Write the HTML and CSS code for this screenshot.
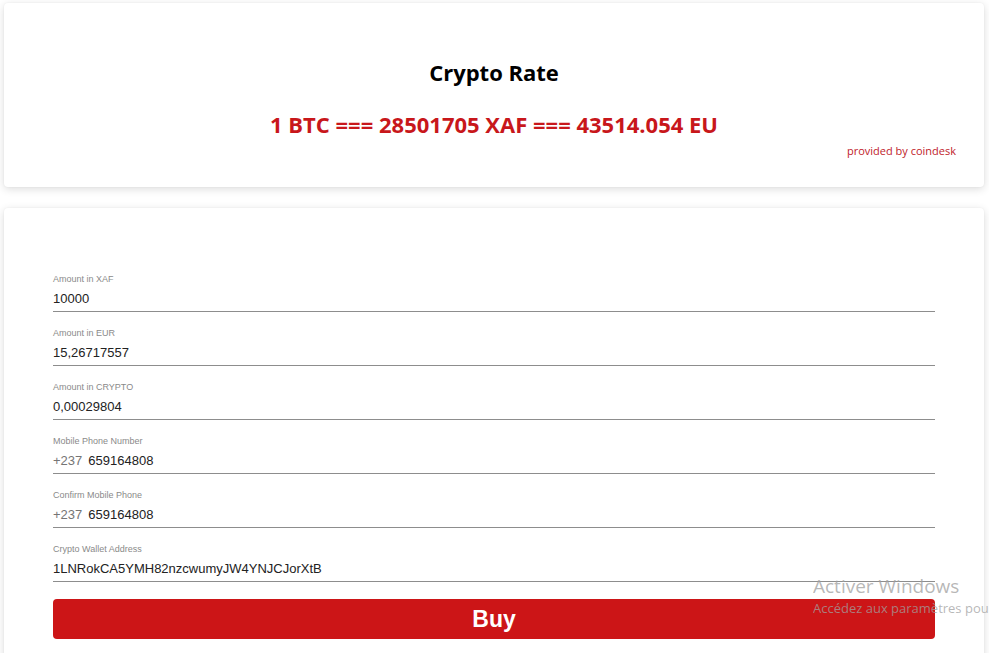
FILE: index.html
```html
<!DOCTYPE html>
<html lang="fr">
<head>
<meta charset="utf-8">
<title>Crypto Rate</title>
<link rel="stylesheet" href="styles.css">
</head>
<body>
<div class="page">
  <section class="card rate-card">
    <h1 class="rate-title">Crypto Rate</h1>
    <p class="rate-value">1 BTC === 28501705 XAF === 43514.054 EU</p>
    <p class="rate-source">provided by coindesk</p>
  </section>

  <section class="card form-card">
    <form class="form">
      <div class="field">
        <label class="field-label">Amount in XAF</label>
        <div class="field-input"><span class="field-value">10000</span></div>
      </div>
      <div class="field">
        <label class="field-label">Amount in EUR</label>
        <div class="field-input"><span class="field-value">15,26717557</span></div>
      </div>
      <div class="field">
        <label class="field-label">Amount in CRYPTO</label>
        <div class="field-input"><span class="field-value">0,00029804</span></div>
      </div>
      <div class="field">
        <label class="field-label">Mobile Phone Number</label>
        <div class="field-input"><span class="field-prefix">+237</span><span class="field-value">659164808</span></div>
      </div>
      <div class="field">
        <label class="field-label">Confirm Mobile Phone</label>
        <div class="field-input"><span class="field-prefix">+237</span><span class="field-value">659164808</span></div>
      </div>
      <div class="field">
        <label class="field-label">Crypto Wallet Address</label>
        <div class="field-input"><span class="field-value">1LNRokCA5YMH82nzcwumyJW4YNJCJorXtB</span></div>
      </div>
      <button type="button" class="buy-btn">Buy</button>
    </form>
  </section>
</div>

<div class="watermark">
  <div class="wm-title">Activer Windows</div>
  <div class="wm-sub">Accédez aux paramètres pour activer Windows.</div>
</div>
</body>
</html>
```

FILE: styles.css
```css
html, body {
  margin: 0;
  padding: 0;
  background: #ffffff;
  overflow: hidden;
  height: 653px;
}

.page {
  padding: 3px 5px 0 4px;
  display: flex;
  flex-direction: column;
  gap: 21px;
}

.card {
  background: #fff;
  border-radius: 4px;
  box-shadow: 0 2px 8px rgba(0, 0, 0, 0.14), 0 0 2px rgba(0, 0, 0, 0.06);
}

.rate-card {
  height: 184px;
  box-sizing: border-box;
  padding: 55px 28px 0 28px;
  font-family: "Open Sans", "Noto Sans", sans-serif;
}

.rate-title {
  margin: 0;
  text-align: center;
  font-size: 22px;
  font-weight: 700;
  line-height: 28px;
  color: #000;
}

.rate-value {
  margin: 24px 0 0 0;
  text-align: center;
  font-size: 22px;
  font-weight: 700;
  line-height: 28px;
  color: #c8171b;
}

.rate-source {
  margin: 6px 0 0 0;
  text-align: right;
  font-size: 11px;
  line-height: 14px;
  color: #c01b2a;
}

.form-card {
  height: 500px;
  box-sizing: border-box;
  padding: 64px 49px 0 49px;
  font-family: "Liberation Sans", Arial, sans-serif;
}

.form {
  display: flex;
  flex-direction: column;
  gap: 14px;
}

.field {
  display: flex;
  flex-direction: column;
  padding-top: 1px;
}

.field-label {
  font-size: 9px;
  line-height: 12px;
  color: #8a8a8a;
}

.field-input {
  display: flex;
  align-items: baseline;
  gap: 6px;
  padding: 6px 0 4px 0;
  border-bottom: 1px solid #8d8d8d;
  font-size: 13px;
  line-height: 16px;
}

.field-prefix {
  color: #757575;
}

.field-value {
  color: #222;
}

.buy-btn {
  margin-top: 3px;
  height: 40px;
  border: none;
  border-radius: 4px;
  background: #cc1517;
  color: #fff;
  font-family: "Liberation Sans", Arial, sans-serif;
  font-size: 23px;
  font-weight: 700;
  padding: 0;
}

.watermark {
  position: absolute;
  left: 813px;
  top: 575px;
  width: 176px;
  overflow: hidden;
  white-space: nowrap;
  font-family: "Open Sans", "Noto Sans", sans-serif;
  color: rgba(160, 160, 160, 0.75);
  pointer-events: none;
}

.wm-title {
  font-size: 19px;
  line-height: 23px;
}

.wm-sub {
  font-size: 13px;
  line-height: 20px;
}
```
